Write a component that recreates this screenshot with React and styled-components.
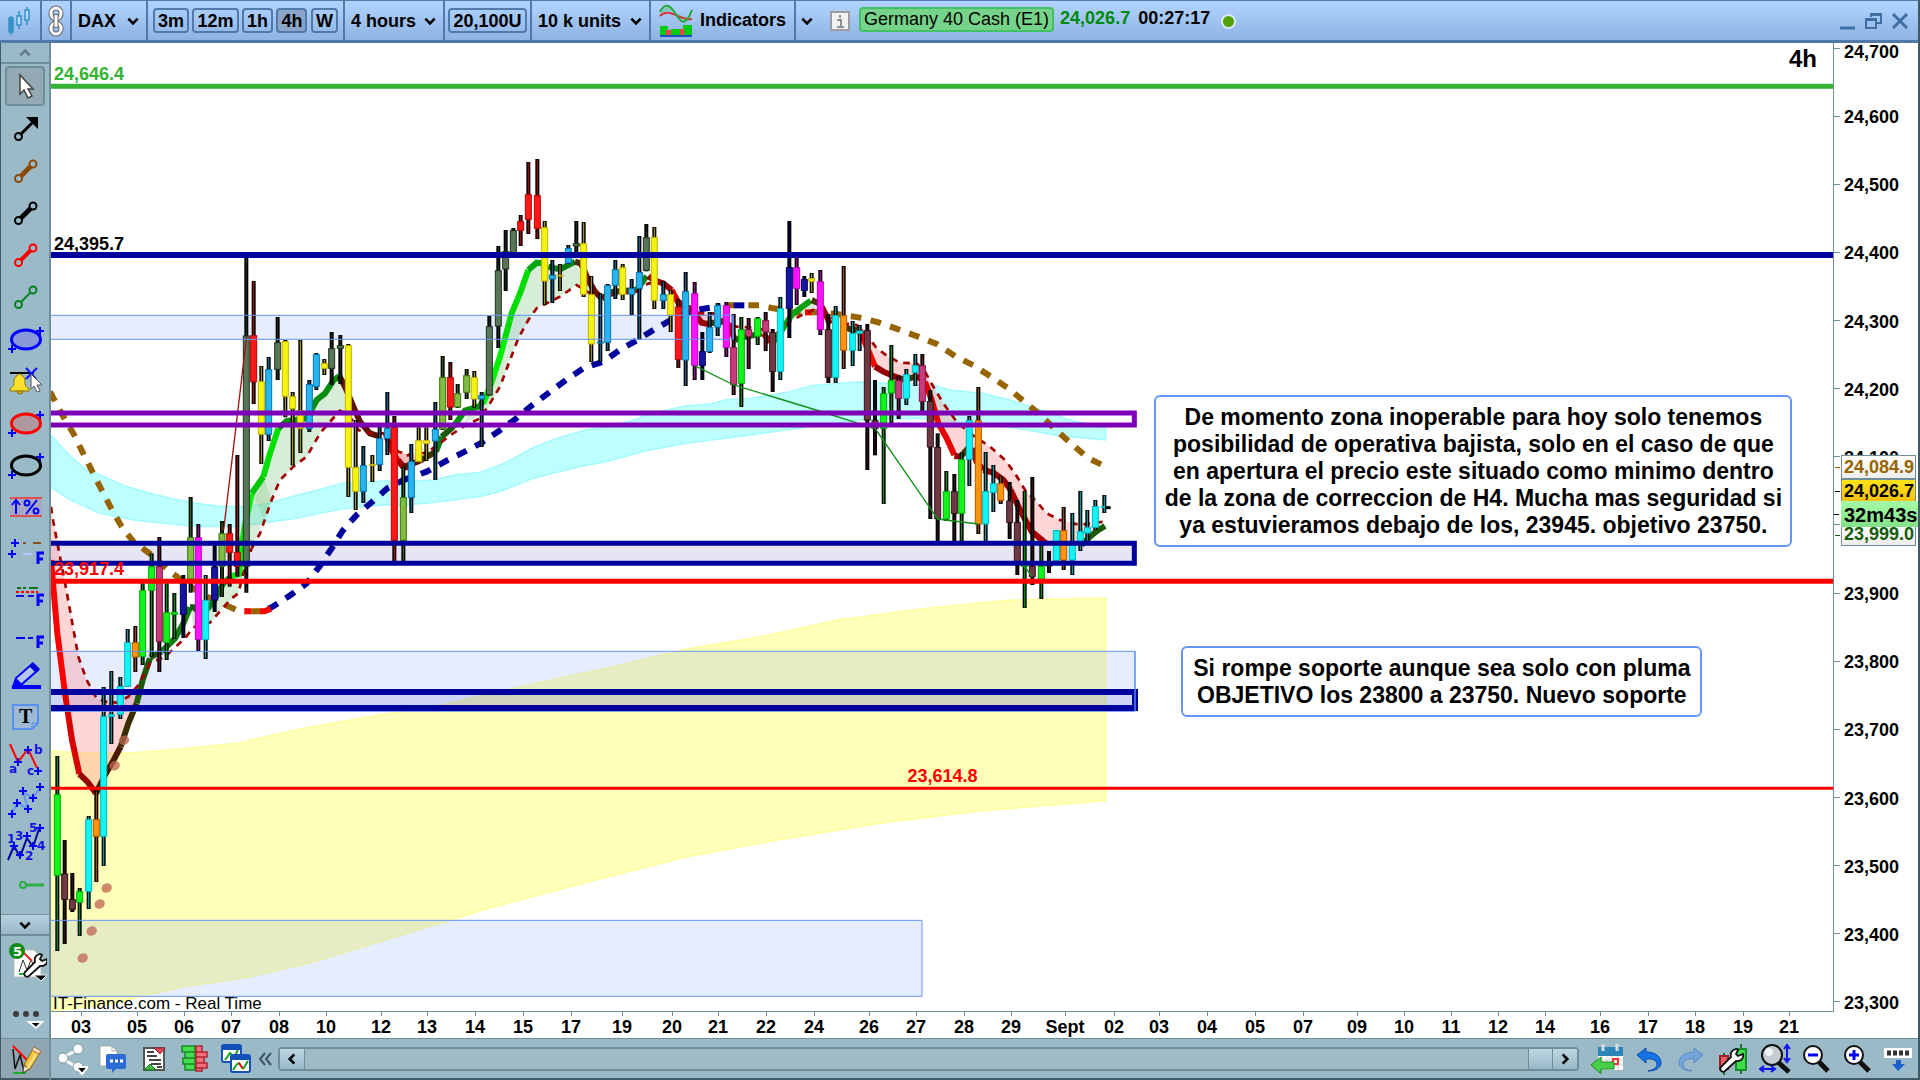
import React, { useState } from "react";
import styled, { createGlobalStyle, css } from "styled-components";

const colors = {
  bar: "#9bbac8",
  barLine: "#708d9a",
  edge: "#3f5965",
  topLine: "#517aaa",
  navy: "#00009c",
  purple: "#7d00b8",
  sky: "#6496f5"
};

const GlobalStyle = createGlobalStyle`
  * { box-sizing: border-box; }
  body {
    margin: 0;
    background: #fff;
    color: #000;
    font-family: "Liberation Sans", Arial, sans-serif;
  }
  button, select, input { font: inherit; color: inherit; }
`;

const candleColors = {
  g: ["#12f51c", "#00ad08"],
  c: ["#12f4f6", "#00b9c2"],
  o: ["#ff940f", "#b85800"],
  m: ["#6f3943", "#34131a"],
  k: ["#587657", "#1e3420"],
  r: ["#ff1818", "#bd0000"],
  y: ["#f5f312", "#c4b400"],
  b: ["#27b5f2", "#0777ad"],
  n: ["#1515a0", "#000060"],
  p: ["#ff12ff", "#bd00bd"],
  d: ["#c63b7b", "#8a0f49"],
  v: ["#80bd42", "#3a7608"]
};

// [x, high, low, top, bottom, color]
const blocks = [
  {
    x: -3,
    y: 1431,
    candles: [
      [22, 708, 1293, 823, 1067, "g"],
      [44, 960, 1272, 1061, 1139, "m"],
      [67, 1059, 1176, 1138, 1169, "m"],
      [89, 1104, 1248, 1114, 1148, "g"],
      [116, 888, 1167, 898, 1115, "c"],
      [139, 813, 1086, 898, 950, "o"],
      [161, 501, 1038, 589, 950, "c"],
      [184, 453, 672, 583, 590, "c"],
      [211, 471, 597, 499, 584, "c"],
      [233, 327, 500, 367, 500, "c"],
      [256, 318, 456, 367, 412, "o"],
      [278, 190, 435, 211, 410, "g"],
      [305, 100, 410, 139, 212, "g"],
      [328, 51, 456, 139, 365, "d"],
      [350, 190, 420, 277, 368, "g"],
      [373, 219, 357, 276, 284, "g"],
      [400, 165, 354, 190, 284, "n"]
    ]
  },
  {
    x: -3,
    y: 531,
    candles: [
      [422, 831, 1118, 952, 1078, "v"],
      [445, 912, 1293, 952, 1259, "p"],
      [467, 1065, 1317, 1140, 1260, "c"],
      [494, 970, 1176, 1040, 1141, "n"],
      [516, 903, 1131, 940, 1040, "v"],
      [539, 912, 1100, 940, 998, "r"],
      [562, 705, 1070, 997, 1040, "r"],
      [589, 113, 1118, 347, 1040, "k"],
      [611, 183, 552, 346, 486, "r"],
      [634, 438, 732, 484, 644, "y"],
      [656, 411, 663, 448, 644, "b"],
      [683, 291, 480, 367, 449, "k"],
      [706, 360, 592, 364, 530, "y"],
      [728, 516, 736, 529, 567, "y"],
      [751, 360, 699, 571, 626, "y"],
      [778, 480, 636, 493, 626, "b"],
      [799, 399, 510, 403, 500, "b"],
      [823, 417, 465, 430, 446, "y"],
      [845, 336, 495, 385, 446, "k"],
      [871, 345, 492, 376, 386, "k"],
      [895, 372, 831, 376, 743, "y"],
      [917, 600, 870, 742, 815, "y"],
      [940, 678, 849, 736, 815, "b"],
      [967, 705, 786, 733, 737, "y"],
      [989, 620, 753, 655, 734, "b"],
      [1012, 516, 705, 624, 656, "b"],
      [1033, 588, 1025, 622, 962, "r"]
    ]
  },
  {
    x: 1047,
    y: 291,
    candles: [
      [10, 980, 1265, 1072, 1202, "v"],
      [34, 912, 1119, 964, 1073, "b"],
      [56, 862, 965, 901, 965, "y"],
      [79, 862, 963, 901, 911, "y"],
      [106, 786, 1020, 868, 904, "b"],
      [128, 648, 870, 712, 868, "v"],
      [151, 666, 840, 712, 802, "r"],
      [173, 732, 804, 760, 802, "v"],
      [200, 687, 777, 706, 758, "v"],
      [223, 693, 803, 712, 778, "y"],
      [245, 756, 921, 766, 778, "b"],
      [268, 528, 767, 559, 766, "k"],
      [295, 318, 624, 391, 559, "k"],
      [317, 270, 453, 334, 388, "k"],
      [340, 264, 338, 271, 338, "k"],
      [362, 225, 318, 244, 272, "r"],
      [385, 66, 282, 163, 239, "r"],
      [412, 57, 297, 166, 266, "r"],
      [434, 243, 495, 262, 424, "y"],
      [457, 360, 489, 405, 418, "b"],
      [480, 372, 453, 405, 409, "y"],
      [505, 315, 372, 325, 370, "b"],
      [529, 243, 338, 310, 319, "k"],
      [551, 246, 471, 310, 464, "y"],
      [574, 408, 666, 463, 613, "y"],
      [601, 460, 666, 605, 610, "b"],
      [623, 432, 633, 436, 608, "b"],
      [646, 360, 477, 388, 437, "b"],
      [668, 372, 480, 382, 464, "y"],
      [695, 417, 525, 445, 464, "b"],
      [718, 288, 600, 397, 446, "b"],
      [739, 252, 394, 292, 392, "k"],
      [763, 261, 507, 292, 482, "y"],
      [790, 423, 507, 463, 482, "b"],
      [812, 450, 576, 463, 527, "y"],
      [835, 478, 684, 500, 659, "r"],
      [857, 396, 738, 454, 661, "b"],
      [884, 426, 720, 460, 677, "p"],
      [907, 576, 720, 634, 677, "n"],
      [929, 516, 639, 562, 635, "b"],
      [953, 489, 588, 496, 562, "b"],
      [979, 486, 651, 496, 623, "p"],
      [1001, 522, 765, 622, 734, "d"],
      [1024, 531, 801, 568, 731, "g"],
      [1046, 534, 687, 568, 590, "d"],
      [1073, 531, 615, 535, 590, "g"],
      [1097, 516, 633, 541, 577, "d"],
      [1118, 567, 756, 577, 695, "m"]
    ]
  },
  {
    x: 2157,
    y: 471,
    candles: [
      [31, 291, 540, 325, 515, "c"],
      [58, 63, 414, 202, 326, "n"],
      [80, 172, 315, 202, 266, "p"],
      [103, 228, 291, 238, 272, "n"],
      [125, 219, 279, 235, 245, "y"],
      [151, 210, 405, 244, 389, "p"],
      [175, 342, 549, 388, 533, "m"],
      [197, 318, 549, 346, 533, "c"],
      [221, 198, 507, 346, 452, "o"],
      [248, 363, 498, 400, 452, "c"],
      [269, 375, 453, 392, 401, "c"],
      [292, 372, 810, 391, 661, "m"],
      [315, 540, 766, 661, 686, "m"],
      [341, 561, 912, 580, 686, "g"],
      [364, 435, 670, 541, 580, "g"],
      [386, 527, 657, 541, 596, "d"],
      [409, 507, 615, 523, 596, "c"],
      [436, 462, 558, 496, 518, "c"],
      [457, 462, 640, 496, 605, "d"],
      [481, 570, 957, 604, 742, "m"],
      [503, 700, 1030, 742, 957, "m"],
      [529, 813, 963, 874, 958, "g"],
      [553, 822, 1030, 874, 941, "m"],
      [575, 758, 1030, 778, 941, "g"],
      [598, 648, 858, 661, 779, "c"],
      [625, 561, 1002, 661, 973, "o"],
      [647, 756, 1030, 874, 973, "c"],
      [670, 795, 936, 850, 878, "c"],
      [692, 828, 912, 850, 902, "o"],
      [719, 846, 1017, 902, 968, "m"],
      [742, 900, 1125, 967, 1090, "m"],
      [764, 873, 1224, 1090, 1100, "g"],
      [787, 831, 1155, 1098, 1130, "m"],
      [814, 1035, 1197, 1098, 1138, "g"],
      [837, 1053, 1119, 1095, 1099, "m"],
      [859, 990, 1084, 991, 1083, "c"],
      [881, 921, 1110, 991, 1081, "o"],
      [907, 939, 1125, 1035, 1081, "c"],
      [931, 873, 1053, 994, 1035, "c"],
      [952, 930, 1035, 982, 1000, "c"],
      [976, 900, 990, 919, 983, "c"],
      [1003, 885, 939, 919, 923, "c"]
    ]
  }
];

// fast average: [block, color, points]
const fastAverage = [
  [0, "#ff0000", "3,120 22,340 45,520"],
  [0, "#d80000", "45,520 66,660 88,762"],
  [0, "#960000", "88,762 112,785 138,820"],
  [0, "#4a1a00", "138,820 165,765 190,722 212,680"],
  [0, "#3a2e00", "212,680 235,610 260,550"],
  [0, "#1c5a08", "260,550 278,480 300,415"],
  [0, "#205a10", "300,412 335,395"],
  [0, "#0e7d14", "335,395 375,355 400,310 420,262"],
  [0, "#156010", "420,262 432,262 450,280"],
  [0, "#0e7d14", "470,270 490,245 520,190 545,168"],
  [0, "#00f000", "545,168 568,162 575,80"],
  [1, "#00f000", "575,980 582,930 605,820"],
  [1, "#00c808", "605,820 640,770"],
  [1, "#00e000", "640,770 660,700 685,625"],
  [1, "#078d10", "685,625 710,603 770,595 800,540 825,520 850,482 868,468"],
  [1, "#5c1400", "868,468 885,500 910,560 930,605 960,640 990,650"],
  [1, "#d80000", "1008,645 1025,690 1045,725"],
  [1, "#a00000", "1045,725 1065,742 1082,740"],
  [2, "#a00000", "-5,960 10,982"],
  [2, "#5c1400", "10,982 35,972 60,962"],
  [2, "#3f3200", "60,962 108,935"],
  [2, "#0e7d14", "108,935 125,890"],
  [2, "#1c5a08", "125,890 160,860"],
  [2, "#078d10", "160,860 195,812 240,798 255,770"],
  [2, "#00f000", "250,790 272,735 300,650 315,595"],
  [2, "#00dc00", "315,595 335,520 360,460 385,390"],
  [2, "#06a90c", "385,390 410,368 430,370"],
  [2, "#078010", "445,380 480,388 525,365"],
  [2, "#4a3000", "525,365 542,370"],
  [2, "#6e0e00", "542,370 570,430 585,455 605,475"],
  [2, "#443600", "605,475 640,455 710,450"],
  [2, "#078010", "710,450 740,408"],
  [2, "#970000", "745,408 760,420 790,430 815,450"],
  [2, "#e00000", "815,450 840,498"],
  [2, "#970000", "840,495 870,505 905,548 930,553"],
  [2, "#443600", "930,550 960,545 980,545"],
  [2, "#c80000", "985,550 1005,600"],
  [2, "#1c5a08", "1005,600 1030,592 1085,580"],
  [2, "#c80000", "1090,580 1105,600 1120,590"],
  [3, "#06a00c", "15,425 45,375 65,345 90,325 122,302"],
  [3, "#443600", "125,300 150,312"],
  [3, "#970000", "155,320 168,345 180,372"],
  [3, "#443600", "215,375 240,388 270,390"],
  [3, "#ff0000", "270,390 290,440 315,500"],
  [3, "#970000", "315,500 340,515 375,530 405,540"],
  [3, "#443600", "405,540 440,528"],
  [3, "#970000", "440,528 465,545"],
  [3, "#e60000", "465,545 485,600 505,670 530,715 553,765"],
  [3, "#970000", "553,768 575,770"],
  [3, "#443600", "572,770 600,738"],
  [3, "#b00000", "605,745 620,785 640,810"],
  [3, "#970000", "640,810 670,818 700,840 722,870"],
  [3, "#a80000", "722,870 750,930 785,995 828,1030"],
  [3, "#1c5a08", "935,1035 960,1010 982,992 1005,978"]
];

const trail = [
  [0, "3,-40 10,5 28,100 50,215 85,410 110,480 140,535 165,545 200,548 235,530 265,495 300,430 345,410 405,355 430,322 480,308 520,262 545,235 565,220 580,160 605,85"],
  [1, "605,985 630,940 665,840 690,780 730,740 770,710 810,640 845,600 870,572 900,590 925,630 960,640 1000,640 1045,695 1080,705"],
  [2, "20,946 80,938 120,910 145,890 190,860 240,835 270,790 300,740 330,660 355,595 385,540 410,505 440,490 480,470 530,435 570,460 610,470 650,463 710,455 745,430 790,430 835,480 865,500 900,520 940,520 985,550 1010,560 1050,562 1110,572"],
  [3, "20,400 60,365 95,345 130,330 180,350 215,370 260,375 280,390 320,445 355,470 390,488 440,490 465,515 490,560 520,610 560,665 600,700 660,740 705,780 735,820 765,870 800,905 830,940 870,960 930,975 960,970 1003,965"]
];

const slowAverage = [
  [1, "#966400", "0,515 40,590 70,640 98,697 127,755 155,810 185,868 215,920 250,965 305,1005 355,1050 400,1085 460,1125 515,1150 565,1172 590,1174"],
  [1, "#00009c", "655,1166 668,1160 722,1125 770,1090 808,1040 845,985 878,932 920,885 967,845 1012,805 1070,775"],
  [2, "#00009c", "5,1022 80,995 136,964 190,937 245,908 298,872 348,836 397,795 448,757 498,720 550,685 610,665 662,628 715,598 770,564 830,530 890,510 950,500 962,498"],
  [2, "#966400", "1045,496 1078,496 1120,505 1140,508"],
  [3, "#966400", "60,337 92,337 150,337 205,343 265,352 325,367 385,388 444,410 500,432 555,468 610,496 663,530 716,566 763,605 815,648 858,690 905,732 952,773 1003,798"]
];

const clouds = [
  [0, "rgba(255,150,150,.4)", "3,-40 28,100 50,215 85,410 110,480 140,535 165,545 200,548 235,530 270,495 260,550 235,610 212,680 165,765 138,820 88,762 66,660 45,520 22,340 3,120"],
  [0, "rgba(130,200,130,.32)", "420,262 450,275 490,245 520,190 545,168 568,162 580,50 605,-80 640,-130 665,-60 605,85 580,160 565,220 520,262 480,308 430,322"],
  [1, "rgba(130,200,130,.32)", "605,820 640,770 660,700 685,625 710,603 770,595 800,540 850,482 868,468 900,590 870,572 845,600 810,640 770,710 730,740 690,780 665,840 645,900"],
  [1, "rgba(255,150,150,.4)", "1020,660 1045,695 1080,705 1080,740 1065,742 1040,720"],
  [2, "rgba(255,150,150,.4)", "-8,930 20,946 50,946 50,965 10,982 -8,960"],
  [2, "rgba(130,200,130,.32)", "250,790 300,650 335,520 385,390 410,368 480,388 525,365 570,450 530,435 480,470 440,490 410,505 385,540 355,595 330,660 300,740 262,810 195,850 200,812"],
  [2, "rgba(255,150,150,.4)", "870,500 900,518 950,522 930,550 905,548"],
  [3, "rgba(130,200,130,.32)", "70,355 122,302 160,350 130,330 95,345"],
  [3, "rgba(255,150,150,.4)", "270,385 320,445 355,470 390,488 440,490 465,515 490,560 520,610 560,665 600,700 660,740 705,780 735,820 765,870 800,905 830,940 870,960 930,975 990,975 935,1035 828,1030 785,995 750,930 722,870 700,840 640,810 600,738 575,770 553,765 530,715 505,670 485,600 465,545 440,528 405,540 340,515 315,500"]
];

const cyanBand =
  "0,1176 50,1231 100,1276 160,1301 220,1328 300,1351 360,1366 440,1381 500,1389 580,1391 650,1381 740,1356 800,1341 870,1321 930,1319 1000,1313 1047,1316 1147,1311 1217,1294 1287,1288 1347,1266 1397,1241 1447,1213 1517,1186 1607,1159 1667,1153 1747,1131 1797,1111 1907,1088 1977,1083 2027,1069 2097,1066 2157,1056 2217,1046 2277,1028 2357,1021 2427,1016 2517,1021 2647,1026 2697,1041 2797,1051 2877,1071 2987,1106 3057,1131 3165,1156 3165,1191 3027,1179 2897,1156 2757,1141 2597,1126 2427,1131 2157,1168 2097,1176 1907,1201 1787,1223 1667,1256 1587,1271 1527,1286 1447,1306 1347,1346 1287,1361 1147,1379 1067,1386 997,1386 867,1399 737,1426 557,1451 437,1451 337,1441 247,1431 147,1411 57,1371 0,1333";

const yellowBand =
  "0,2124 100,2129 240,2129 400,2116 567,2099 640,2081 777,2052 900,2030 1170,1986 1350,1944 1530,1904 1683,1872 1905,1818 2124,1782 2358,1731 2637,1694 2877,1671 3165,1664 3165,2274 2787,2304 2493,2340 2199,2388 1905,2442 1611,2517 1317,2595 1170,2640 777,2760 597,2802 396,2832 288,2856 180,2885 0,2904";

const dots = [[222, 661], [194, 737], [170, 1104], [149, 1152], [125, 1233], [98, 1314]];

/* ---------- axes ---------- */

const prices = Array.from({ length: 15 }, (_, i) => (24700 - i * 100).toLocaleString("en-US"));

const dates = [
  ["03", 81], ["05", 137], ["06", 184], ["07", 231], ["08", 279], ["10", 326], ["12", 381], ["13", 427],
  ["14", 475], ["15", 523], ["17", 571], ["19", 622], ["20", 672], ["21", 718], ["22", 766], ["24", 814],
  ["26", 869], ["27", 916], ["28", 964], ["29", 1011], ["Sept", 1065], ["02", 1114], ["03", 1159],
  ["04", 1207], ["05", 1255], ["07", 1303], ["09", 1357], ["10", 1404], ["11", 1451], ["12", 1498],
  ["14", 1545], ["16", 1600], ["17", 1648], ["18", 1695], ["19", 1743], ["21", 1789]
];

/* ---------- shell ---------- */

const Window = styled.div`
  display: flex;
  flex-direction: column;
  min-height: 100vh;
  border-right: 2px solid ${colors.edge};
  background: #fff;
`;

const TopBar = styled.header`
  display: flex;
  height: 43px;
  flex-shrink: 0;
  border-top: 1px solid ${colors.topLine};
  border-bottom: 3px solid ${colors.topLine};
  background: linear-gradient(#b1d4ff, #8fb3e2);
  font-size: 18px;
  font-weight: 700;
`;

const Cell = styled.div`
  display: flex;
  align-items: center;
  justify-content: ${({ $align }) => $align || "flex-start"};
  width: ${({ $w }) => ($w ? `${$w}px` : "auto")};
  padding: 0 ${({ $pad }) => $pad || 0}px;
  border-right: ${({ $plain }) => ($plain ? 0 : 2)}px solid ${colors.topLine};
  white-space: nowrap;
`;

const PlainButton = styled.button`
  display: flex;
  align-items: center;
  justify-content: center;
  gap: 7px;
  padding: 0;
  border: 0;
  background: none;
  font-weight: inherit;
`;

const Picker = styled.label`
  display: flex;
  flex: 1;
  align-items: center;
  justify-content: space-between;
`;

const Select = styled.select`
  appearance: none;
  padding: 0;
  border: 0;
  background: none;
  font-weight: 700;
`;

const Interval = styled.button`
  height: 25px;
  padding: 0 3px;
  border: 2px solid ${colors.topLine};
  border-radius: 4px;
  background: ${({ $active }) => ($active ? "#8aa5c8" : "transparent")};
  font-weight: 700;
  line-height: 20px;
`;

const Instrument = styled.button`
  height: 25px;
  margin: 0 0 3px 9px;
  padding: 0 3px;
  border: 2px solid #43c065;
  border-radius: 4px;
  background: #76d48a;
  font-size: 18px;
  font-weight: 400;
  line-height: 18px;
`;

const Quote = styled.output`
  padding-bottom: 4px;
  margin-left: ${({ $gap }) => $gap}px;
  color: ${({ $color }) => $color};
`;

const Live = styled.span`
  width: 15px;
  height: 15px;
  margin: 2px 0 0 11px;
  border: 2px solid #dcebf5;
  border-radius: 50%;
  background: #4fa000;
`;

const WindowButtons = styled.div`
  display: flex;
  align-items: center;
  gap: 8px;
  margin-left: auto;
  padding-right: 9px;
`;

const Body = styled.div`
  display: flex;
  flex: 1;
`;

const SideBar = styled.nav`
  display: flex;
  flex-direction: column;
  flex-shrink: 0;
  width: 51px;
  border-left: 1px solid ${colors.edge};
  border-right: 2px solid ${colors.barLine};
  background: ${colors.bar};
`;

const Scroller = styled(PlainButton)`
  height: ${({ $h }) => $h}px;
  border-bottom: 2px solid ${colors.barLine};
  ${({ $raised }) =>
    $raised &&
    css`
      border-top: 1px solid ${colors.barLine};
      background: linear-gradient(#b8d3df, #98b6c5);
    `}
`;

const Tools = styled.div`
  display: flex;
  flex: 1;
  flex-direction: column;
  padding-top: 2px;
`;

const Tool = styled(PlainButton)`
  width: 48px;
  height: ${({ $h }) => $h || 42}px;
`;

const Selected = styled(Tool)`
  width: 40px;
  height: 40px;
  margin: 0 4px 2px;
  border: 2px solid ${colors.barLine};
  border-radius: 4px;
  background: #93a9b3;
`;

const DrawTool = styled(Tool)`
  height: 42px;
  border-top: 1px solid ${colors.barLine};
  border-bottom: 2px solid ${colors.edge};
  background: #90a6b1;
`;

const Main = styled.main`
  display: flex;
  flex: 1;
  flex-direction: column;
  min-width: 0;
`;

const ChartGrid = styled.div`
  display: grid;
  flex: 1;
  grid-template-columns: 1fr 84px;
  grid-template-rows: 1fr 26px;
`;

const Plot = styled.section`
  position: relative;
  border-right: 1px solid ${colors.barLine};
  border-bottom: 1px solid ${colors.barLine};
  overflow: hidden;
`;

const Canvas = styled.svg`
  position: absolute;
  inset: 0;
  width: 100%;
  height: 100%;
`;

const Label = styled.span`
  position: absolute;
  left: ${({ $x }) => (100 * ($x - 51)) / 1783}%;
  top: ${({ $y }) => (100 * ($y - 43)) / 969}%;
  color: ${({ $color }) => $color || "#000"};
  font-size: ${({ $size }) => $size || 18}px;
  font-weight: ${({ $weight }) => $weight || 700};
  line-height: 20px;
  white-space: nowrap;
`;

const Note = styled.p`
  position: absolute;
  left: ${({ $x }) => (100 * ($x - 51)) / 1783}%;
  top: ${({ $y }) => (100 * ($y - 43)) / 969}%;
  width: ${({ $w }) => $w}px;
  margin: 0;
  padding: 7px 0 6px;
  border: 2px solid ${colors.sky};
  border-radius: 6px;
  background: #fff;
  font-size: 23px;
  font-weight: 700;
  line-height: 27px;
  text-align: center;
  white-space: nowrap;
`;

const PriceAxis = styled.aside`
  position: relative;
  display: flex;
`;

const PriceList = styled.ul`
  display: flex;
  flex: 1;
  flex-direction: column;
  justify-content: space-between;
  margin: 0;
  padding: 0 0 5px;
  list-style: none;
  font-size: 18px;
  font-weight: 700;

  li {
    display: flex;
    align-items: center;
    gap: 4px;
    height: 10px;
    line-height: 10px;
  }
  li::before {
    content: "";
    width: 6px;
    height: 1px;
    background: ${colors.barLine};
  }
  li span {
    padding-top: 2px;
  }
  li:first-child span {
    padding-top: 8px;
  }
`;

const PriceTag = styled.span`
  position: absolute;
  left: 7px;
  right: ${({ $wide }) => ($wide ? 0 : 2)}px;
  top: ${({ $y }) => (100 * ($y - 43)) / 969}%;
  height: ${({ $h }) => $h}px;
  padding-left: ${({ $wide }) => ($wide ? 3 : 2)}px;
  border: ${({ $wide }) => ($wide ? 0 : 1)}px solid ${colors.barLine};
  background: ${({ $bg }) => $bg};
  color: ${({ $color }) => $color};
  font-size: ${({ $wide }) => ($wide ? 20 : 18)}px;
  font-weight: 700;
  line-height: ${({ $h, $wide }) => ($wide ? $h + 2 : $h - 2)}px;
  white-space: nowrap;

  &::before {
    content: "";
    position: absolute;
    left: -7px;
    top: 50%;
    width: 5px;
    height: 1px;
    background: ${({ $color }) => $color};
  }
`;

const DateAxis = styled.ol`
  display: flex;
  grid-column: 1 / -1;
  margin: 0;
  padding: 0 0 0 30px;
  list-style: none;
  font-size: 18px;
  font-weight: 700;
`;

const DateMark = styled.li`
  flex: ${({ $gap }) => $gap} 0 0;
  min-width: 0;
  background: linear-gradient(${colors.barLine}, ${colors.barLine}) 0 0 / 1px 4px no-repeat;

  span {
    display: flex;
    justify-content: center;
    width: 0;
    padding-top: 5px;
    line-height: 20px;
  }
`;

const BottomBar = styled.footer`
  display: flex;
  align-items: center;
  height: 42px;
  border-top: 1px solid ${colors.barLine};
  border-bottom: 2px solid ${colors.edge};
  background: ${colors.bar};
`;

const BarTool = styled(PlainButton)`
  flex-shrink: 0;
  width: ${({ $w }) => $w || 41}px;
  height: 38px;
`;

const ScrollTrack = styled.div`
  display: flex;
  flex: 1;
  height: 24px;
  margin: 0 7px 0 4px;
  border: 2px solid ${colors.barLine};
  border-radius: 4px;
`;

const ScrollArrow = styled(PlainButton)`
  width: 24px;
  background: linear-gradient(#bed8e2, #98b7c6);
`;

const Range = styled.input`
  appearance: none;
  flex: 1;
  min-width: 0;
  height: 20px;
  margin: 0;
  border: solid ${colors.barLine};
  border-width: 0 1px;
  background: #a0bac6;

  &::-webkit-slider-thumb {
    appearance: none;
    width: 24px;
    height: 20px;
    border-left: 1px solid ${colors.barLine};
    background: linear-gradient(#bed8e2, #98b7c6);
  }
`;

/* ---------- icons ---------- */

const Caret = ({ dir = "down", color = "#000", size = 14 }) => {
  const turn = { down: 0, up: 180, left: 90, right: -90 }[dir];
  return (
    <svg width={size} height={size} viewBox="0 0 12 12" aria-hidden="true">
      <path d="M2 4l4 4 4-4" transform={`rotate(${turn} 6 6)`} fill="none" stroke={color} strokeWidth="2.2" />
    </svg>
  );
};

const Icon = ({ w = 48, h = 42, children }) => (
  <svg width={w} height={h} viewBox={`0 0 ${w} ${h}`} fill="none" aria-hidden="true">
    {children}
  </svg>
);

const Plus = ({ x, y, color = "#00f" }) => (
  <path d={`M${x - 4} ${y}h8M${x} ${y - 4}v8`} stroke={color} strokeWidth="2" />
);

const Segment = ({ color, width }) => (
  <Icon>
    <path d="M20 26L30 16" stroke={color} strokeWidth={width} />
    <circle cx="17.500" cy="28.500" r="3.500" stroke={color} strokeWidth="2" />
    <circle cx="32" cy="14" r="3.500" stroke={color} strokeWidth="2" />
  </Icon>
);

const Ellipse = ({ color, fill, marks = "#00f" }) => (
  <Icon>
    <Plus x={11} y={31} color={marks} />
    <Plus x={39} y={13} color={marks} />
    <ellipse cx="25" cy="21.500" rx="14.500" ry="9.500" fill={fill} stroke={color} strokeWidth="3" />
  </Icon>
);

const FMark = ({ y }) => <path d={`M37 ${y + 11}V${y}H43M36 ${y + 6}H42`} stroke="#00f" strokeWidth="3" />;

const glyph = { fontFamily: "DejaVu Sans, sans-serif", fontSize: 12, fontWeight: 700, fill: "#1414e0" };

const DrawingIcon = () => (
  <Icon w={36} h={32}>
    <path d="M6 6l2 20 5-14 4 16 3-8" stroke="#111" strokeWidth="1.500" />
    <path d="M6 30h13" stroke="#19b030" strokeWidth="2" />
    <path d="M6 3l14 14" stroke="#f00" strokeWidth="2" />
    <path d="M27 4l7 4-11 18-7 4 1-8z" fill="#f5c542" stroke="#8a6a1a" />
    <path d="M27 4l7 4-2 3-7-4z" fill="#f7dcc8" stroke="#a07840" />
    <path d="M17 22l5 4-6 4z" fill="#f2e0c0" stroke="#444" />
    <path d="M29 11L20 26" stroke="#fbe48a" strokeWidth="2" />
  </Icon>
);

const Magnifier = ({ children }) => (
  <Icon w={30} h={30}>
    <path d="M18 18l9 9" stroke="#111" strokeWidth="5" />
    <circle cx="12" cy="11" r="9" fill="#fff" stroke="#111" strokeWidth="2" />
    {children}
  </Icon>
);

const Wrench = () => (
  <path
    d="M4 24l10-10c-1-4 1-7 5-8l2 1-2 4 2 2 5-2c1 4-2 8-7 7L8 28c-3 2-6-1-4-4z"
    fill="#fff"
    stroke="#111"
    strokeWidth="1.800"
  />
);

const drawingTools = [
  ["Arrow", <Icon><path d="M19 27L31 15" stroke="#000" strokeWidth="3" /><path d="M37 9v12L25 9z" fill="#000" /><circle cx="17.500" cy="28.500" r="3.500" stroke="#000" strokeWidth="2" /></Icon>],
  ["Brown segment", <Segment color="#8a4a08" width={5} />],
  ["Black segment", <Segment color="#000" width={5} />],
  ["Red segment", <Segment color="#f00" width={4} />],
  ["Green segment", <Segment color="#088020" width={2} />],
  ["Blue ellipse", <Ellipse color="#00f" fill="#8898d8" />],
  ["Alert", (
    <Icon>
      <path d="M9 13h24" stroke="#000" strokeWidth="2" />
      <path d="M25 8l10 11M36 8L25 19" stroke="#11f" strokeWidth="2" />
      <path d="M18 14c-1 0-2 1-2 2-3 1-3 4-3 8 0 2-3 4-4 5v2h19v-2c-1-1-4-3-4-5 0-4 0-7-3-8 0-1-1-2-3-2z" fill="#fbe12c" stroke="#8a7400" />
      <path d="M16 31a3 3 0 006 0z" fill="#d5ac00" stroke="#8a7400" />
      <path d="M30 14v15l3-3 3 6 3-1-3-6h5z" fill="#fff" stroke="#555" />
    </Icon>
  )],
  ["Red ellipse", <Ellipse color="#f00" fill="#b098a0" />],
  ["Black ellipse", <Ellipse color="#000" />],
  ["Percent", (
    <Icon>
      <path d="M9 12h32v18H9z" fill="#a9a8c4" />
      <path d="M9 12h32M9 30h32" stroke="#e05050" strokeWidth="2" />
      <path d="M15 28V15M11 19l4-5 4 5" stroke="#00f" strokeWidth="2" />
      <circle cx="26" cy="17" r="2.500" stroke="#00f" strokeWidth="2" />
      <circle cx="35" cy="25" r="2.500" stroke="#00f" strokeWidth="2" />
      <path d="M36 14L25 28" stroke="#00f" strokeWidth="2" />
    </Icon>
  )],
  ["Fibonacci", (
    <Icon>
      <Plus x={14} y={15} /><Plus x={11} y={26} />
      <path d="M22 15h3M32 15h8" stroke="#805020" strokeWidth="2" />
      <path d="M22 26h9" stroke="#b8c8ff" strokeWidth="2" />
      <FMark y={25} />
    </Icon>
  )],
  ["Extension", (
    <Icon>
      <path d="M16 18h4M22 18h3M28 18h9" stroke="#107020" strokeWidth="2" />
      <path d="M15 22h22" stroke="#f00" strokeWidth="2" strokeDasharray="3 2" />
      <path d="M15 26h8M27 26h6" stroke="#11d" strokeWidth="2" />
      <FMark y={25} />
    </Icon>
  )],
  ["Retracement", <Icon><path d="M15 26h9M27 26h5" stroke="#00f" strokeWidth="2" /><FMark y={25} /></Icon>],
  ["Freehand", (
    <Icon>
      <path d="M11 33h29" stroke="#00f" strokeWidth="4" />
      <path d="M12 33l3-9 16-14 6 6-16 14z" fill="#b3c5e8" stroke="#00f" strokeWidth="2" />
      <path d="M28 12l4-4 7 7-4 4z" fill="#00d" />
      <path d="M12 33l3-9 6 6z" fill="#00f" />
    </Icon>
  )],
  ["Text", (
    <Icon>
      <path d="M12 9h25v18l-6 6H12z" fill="#9db9d4" stroke="#5a90ee" strokeWidth="2" />
      <path d="M31 33v-6h6" stroke="#5a90ee" />
      <text x="18" y="27" fontFamily="Liberation Serif, serif" fontSize="20" fontWeight="700" fill="#000">T</text>
    </Icon>
  )],
  ["Pattern abc", (
    <Icon>
      <path d="M9 6l8 18 10-13 9 19" stroke="#f00" strokeWidth="2" />
      <Plus x={17} y={24} /><Plus x={27} y={12} /><Plus x={37} y={33} />
      <text x="8" y="35" {...glyph}>a</text><text x="33" y="16" {...glyph}>b</text><text x="26" y="37" {...glyph}>c</text>
    </Icon>
  )],
  ["Polyline", (
    <Icon>
      <path d="M11 34l5-11 11 6-5-17 10 6 7-11" stroke="#6496f5" strokeWidth="2" />
      <Plus x={11} y={34} /><Plus x={16} y={23} /><Plus x={27} y={29} /><Plus x={22} y={11} /><Plus x={32} y={18} /><Plus x={39} y={7} />
    </Icon>
  )],
  ["Elliott wave", (
    <Icon>
      <path d="M7 38l6-14 6 11 7-19 6 9 6-18" stroke="#009" strokeWidth="2" />
      <Plus x={13} y={24} /><Plus x={19} y={33} /><Plus x={26} y={14} /><Plus x={32} y={24} /><Plus x={39} y={6} />
      <text x="6" y="21" {...glyph}>1</text><text x="24" y="38" {...glyph}>2</text><text x="14" y="18" {...glyph}>3</text>
      <text x="36" y="28" {...glyph}>4</text><text x="28" y="10" {...glyph}>5</text>
    </Icon>
  )],
  ["Horizontal ray", <Icon><circle cx="22" cy="21" r="3" stroke="#2fae45" strokeWidth="2" /><path d="M25 21h18" stroke="#2fae45" strokeWidth="3" /></Icon>]
];

const leftActions = [
  ["Share", (
    <Icon w={32} h={32}>
      <path d="M23 6L6 15l17 11" stroke="#fff" strokeWidth="3" />
      <g fill="#fff" stroke="#7d98a5"><circle cx="22" cy="6" r="5" /><circle cx="7" cy="15" r="5" /><circle cx="22" cy="24" r="5" /></g>
      <path d="M20 24h12l-6 7z" fill="#000" stroke="#fff" strokeWidth="2" />
    </Icon>
  )],
  ["Chat", (
    <Icon w={30} h={30}>
      <path d="M2 2h12l5 5v15H2z" fill="#fff" stroke="#aaa" /><path d="M14 2v5h5" stroke="#aaa" />
      <path d="M10 10h16q2 0 2 2v11q0 2-2 2h-8l-4 4v-4h-4q-2 0-2-2V12q0-2 2-2z" fill="#2c6bd4" />
      <path d="M12 17h3M17 17h3M22 17h3" stroke="#fff" strokeWidth="3" />
    </Icon>
  )],
  ["Orders list", (
    <Icon w={26} h={30}>
      <path d="M3 4h20v22H3z" fill="#fff" stroke="#555" strokeWidth="2" />
      <path d="M6 8h7M6 12h10M8 16h12M10 20h10M16 23h5" stroke="#444" strokeWidth="2" />
      <path d="M13 4h11l-5 6z" fill="#e04858" stroke="#a02030" /><path d="M3 26h12l-6-6z" fill="#3cc040" stroke="#187020" />
    </Icon>
  )],
  ["Order book", (
    <Icon w={30} h={30}>
      <path d="M2 2h13v6H2zM5 8h10v6H5zM3 14h12v6H3zM5 20h10v6H5z" fill="#45dc50" stroke="#188820" strokeWidth="1.500" />
      <path d="M16 2h6v6h-6zM16 8h11v5H16zM16 13h8v6h-8zM16 19h11v5H16zM16 24h6v3h-6z" fill="#f07080" stroke="#b02030" strokeWidth="1.500" />
    </Icon>
  )],
  ["Layouts", (
    <Icon w={32} h={32}>
      <rect x="2" y="2" width="19" height="17" rx="2" fill="#fff" stroke="#1350b8" strokeWidth="2" /><path d="M2 5h19" stroke="#1350b8" strokeWidth="4" />
      <path d="M5 17l5-7 4 4 4-7" stroke="#12a020" strokeWidth="2" />
      <rect x="11" y="12" width="19" height="17" rx="2" fill="#fff" stroke="#1350b8" strokeWidth="2" /><path d="M11 15h19" stroke="#1350b8" strokeWidth="4" />
      <path d="M13 27l4-6 3-1" stroke="#12a020" strokeWidth="2" /><path d="M19 20l4 6" stroke="#e00" strokeWidth="2" /><path d="M23 26l5-8" stroke="#12a020" strokeWidth="2" />
    </Icon>
  )]
];

const rightActions = [
  ["Go to date", (
    <Icon w={34} h={32}>
      <path d="M8 12h25v15H8z" fill="#fff" /><path d="M8 4h25v9H8z" fill="#2c84b8" />
      <path d="M13 1v7M27 1v7" stroke="#d5dde2" strokeWidth="3" />
      <path d="M12 13v14M17 13v14M22 13v14M28 13v14M8 17h25M8 22h25" stroke="#ccc" />
      <path d="M23 16h5v5h-5z" stroke="#f33" strokeWidth="2" />
      <path d="M1 22l10-8v5h13v7H11v5z" fill="#48d048" stroke="#208820" />
    </Icon>
  ), 42],
  ["Undo", <Icon w={30} h={30}><path d="M3 11l9-7v4c10 0 15 5 15 11 0 5-6 8-13 8 6-1 9-4 9-7 0-3-4-6-11-5v4z" fill="#1474e8" stroke="#0c48a8" /></Icon>, 42],
  ["Redo", <Icon w={30} h={30}><path d="M27 11l-9-7v4C8 8 3 13 3 19c0 5 6 8 13 8-6-1-9-4-9-7 0-3 4-6 11-5v4z" fill="#74a4dc" stroke="#5c8cc4" /></Icon>, 42],
  ["Chart settings", (
    <Icon w={32} h={32}>
      <path d="M7 10v22M24 1v30" stroke="#207030" strokeWidth="2" /><path d="M3 13h8v13H3z" fill="#e06068" stroke="#a02028" strokeWidth="2" />
      <path d="M19 6h10v21H19z" fill="#40dc48" stroke="#18902a" strokeWidth="2" /><Wrench />
    </Icon>
  ), 42],
  ["Zoom region", (
    <Icon w={32} h={32}>
      <path d="M19 19l11 10" stroke="#111" strokeWidth="5" /><circle cx="13" cy="12" r="10" fill="#c4cdd1" stroke="#111" strokeWidth="2" />
      <circle cx="10" cy="9" r="4" fill="#edf1f3" />
      <path d="M28 4v13M25 6l3-4 3 4M25 15l3 4 3-4M3 26h11M5 23l-4 3 4 3M12 23l4 3-4 3" stroke="#1212f0" strokeWidth="2" />
    </Icon>
  )],
  ["Zoom out", <Magnifier><path d="M7 11h10" stroke="#00f" strokeWidth="3" /></Magnifier>],
  ["Zoom in", <Magnifier><path d="M7 11h10M12 6v10" stroke="#00f" strokeWidth="3" /></Magnifier>],
  ["Show keyboard", (
    <Icon w={30} h={30}>
      <path d="M1 4h28v10H1z" fill="#fff" /><path d="M4 9h23" stroke="#333" strokeWidth="5" strokeDasharray="4 2" />
      <path d="M13 16h5v4h4l-7 7-6-7h4z" fill="#1c60d0" />
    </Icon>
  )]
];

/* ---------- parts ---------- */

const intervals = ["3m", "12m", "1h", "4h", "W"];

function Dropdown({ label, value }) {
  return (
    <Picker>
      <Select aria-label={label} defaultValue={value}>
        <option>{value}</option>
      </Select>
      <Caret />
    </Picker>
  );
}

function Toolbar() {
  const [interval, setActive] = useState("4h");
  return (
    <TopBar>
      <Cell $w={42} $align="center">
        <PlainButton aria-label="Chart type">
          <Icon w={28} h={30}>
            <g stroke="#3393c8" strokeWidth="1.500">
              <path d="M5 10v19M13 5v18M21 1v18" />
              <path d="M3 12h4v14H3z" fill="#3393c8" />
              <path d="M11 10h4v9h-4zM19 4h4v10h-4z" fill="#b9dcfa" />
            </g>
          </Icon>
        </PlainButton>
      </Cell>
      <Cell $w={30} $align="center">
        <PlainButton aria-label="Link charts">
          <Icon w={18} h={34}>
            <g stroke="#666">
              <rect x="4" y="4" width="10" height="11" rx="5" strokeWidth="5" />
              <rect x="4" y="19" width="10" height="11" rx="5" strokeWidth="5" />
            </g>
            <g stroke="#fff">
              <rect x="4" y="4" width="10" height="11" rx="5" strokeWidth="3" />
              <rect x="4" y="19" width="10" height="11" rx="5" strokeWidth="3" />
            </g>
            <path d="M9 10v14" stroke="#666" strokeWidth="5" />
            <path d="M9 11v12" stroke="#fff" strokeWidth="3" />
          </Icon>
        </PlainButton>
      </Cell>
      <Cell $w={76} $pad={6}>
        <Dropdown label="Symbol" value="DAX" />
      </Cell>
      <Cell $w={197} $align="space-between" $pad={5}>
        {intervals.map(name => (
          <Interval key={name} $active={name === interval} onClick={() => setActive(name)}>
            {name}
          </Interval>
        ))}
      </Cell>
      <Cell $w={100} $pad={6}>
        <Dropdown label="Timeframe" value="4 hours" />
      </Cell>
      <Cell $w={87} $align="center">
        <Interval>20,100U</Interval>
      </Cell>
      <Cell $w={119} $pad={6}>
        <Dropdown label="Units" value="10 k units" />
      </Cell>
      <Cell $w={145} $align="center">
        <PlainButton>
          <Icon w={34} h={34}>
            <path d="M2 10C6 0 11 1 16 9s10 14 16-2l-4 6C20 12 12 2 2 10z" fill="#86c7bd" />
            <path d="M1 12C10 2 22 18 33 15" stroke="#d8303c" strokeWidth="2" />
            <path d="M1 8C6-2 11 1 16 9s10 16 17-3" stroke="#22a838" strokeWidth="2" />
            <path d="M1 22h8v9H1zM12 25h10v6H12zM24 21h9v10h-9z" fill="#00cc10" />
            <path d="M7 26h5v5H7zM21 25h4v6h-4z" fill="#f04050" />
            <path d="M1 32h32" stroke="#1c50c0" strokeWidth="2" />
          </Icon>
          Indicators
        </PlainButton>
      </Cell>
      <Cell $plain $pad={4}>
        <PlainButton aria-label="More indicators"><Caret /></PlainButton>
      </Cell>
      <Cell $plain $pad={12}>
        <PlainButton aria-label="Instrument details">
          <Icon w={20} h={20}>
            <path d="M1 1h18v18H1z" fill="#f2f2f2" stroke="#9c9c9c" strokeWidth="2" />
            <path d="M10 4v3M7 9h4v7M7 16h7" stroke="#8a9298" strokeWidth="2" />
          </Icon>
        </PlainButton>
        <Instrument>Germany 40 Cash (E1)</Instrument>
        <Quote $gap={6} $color="#008a0a">24,026.7</Quote>
        <Quote $gap={8} $color="#000">00:27:17</Quote>
        <Live />
      </Cell>
      <WindowButtons>
        <PlainButton aria-label="Minimize">
          <Icon w={18} h={20}><path d="M1 17h15" stroke="#3f6ea5" strokeWidth="3" /></Icon>
        </PlainButton>
        <PlainButton aria-label="Restore">
          <Icon w={18} h={20}><path d="M6 6V3h10v9h-4M1 8h10v9H1zM1 9h10M6 4h10" stroke="#3f6ea5" strokeWidth="2" /></Icon>
        </PlainButton>
        <PlainButton aria-label="Close">
          <Icon w={18} h={20}><path d="M2 3l14 14M16 3L2 17" stroke="#3f6ea5" strokeWidth="3" /></Icon>
        </PlainButton>
      </WindowButtons>
    </TopBar>
  );
}

function Sidebar() {
  return (
    <SideBar>
      <Scroller $h={21} aria-label="Scroll up"><Caret dir="up" color="#627b87" /></Scroller>
      <Tools>
        <Selected aria-label="Pointer">
          <Icon w={36} h={36}>
            <path d="M13 7v19l4-4 4 8 4-2-4-7h5z" fill="#fff" stroke="#444" strokeWidth="1.500" />
          </Icon>
        </Selected>
        {drawingTools.map(([name, icon]) => (
          <Tool key={name} aria-label={name}>{icon}</Tool>
        ))}
      </Tools>
      <Scroller $h={22} $raised aria-label="Scroll down"><Caret /></Scroller>
      <Tool $h={53} aria-label="Active drawings">
        <Icon w={44} h={48}>
          <path d="M11 11h20l7 7v20H11z" fill="#fff" stroke="#bbb" />
          <path d="M16 33l4-12 4 10 4-10 3 6" stroke="#333" /><path d="M16 35h10" stroke="#19b030" strokeWidth="2" />
          <path d="M20 13l9 9" stroke="#e22" strokeWidth="2" />
          <g transform="translate(18 9)"><Wrench /></g>
          <circle cx="14" cy="12" r="8" fill="#128a1c" />
          <text x="10" y="17" {...glyph} fontSize="13" fill="#fff">5</text>
          <path d="M31 36h13l-6 6z" fill="#000" stroke="#fff" />
        </Icon>
      </Tool>
      <Tool $h={49} aria-label="More tools">
        <Icon>
          <g fill="#3c3c3c"><circle cx="15" cy="21" r="3" /><circle cx="25" cy="21" r="3" /><circle cx="35" cy="21" r="3" /></g>
          <path d="M28 29h13l-6 6z" fill="#000" stroke="#fff" strokeWidth="2" />
        </Icon>
      </Tool>
      <DrawTool aria-label="Drawing tools"><DrawingIcon /></DrawTool>
    </SideBar>
  );
}

const shift = i => `translate(${blocks[i].x} ${blocks[i].y})`;

function Candle({ data: [x, high, low, top, bottom, tone] }) {
  const [fill, edge] = candleColors[tone];
  return (
    <g>
      <path d={`M${x} ${high}V${low}`} stroke="#000" strokeWidth="12" />
      <path d={`M${x} ${high + 2}V${low - 2}`} stroke={edge} strokeWidth="3" />
      <rect x={x - 9} y={top + 1} width="18" height={Math.max(bottom - top - 2, 2)} fill={fill} stroke={edge} strokeWidth="3" />
    </g>
  );
}

function PriceChart() {
  return (
    <Canvas viewBox="0 0 5346 2904" preserveAspectRatio="none" fill="none" role="img" aria-label="DAX 4 hours">
      <polygon points={yellowBand} fill="rgba(255,255,90,.42)" stroke="rgba(255,255,120,.6)" strokeWidth="4" />
      <polygon points={cyanBand} fill="rgba(110,255,255,.45)" stroke="rgba(120,245,255,.6)" strokeWidth="4" />
      <g fill="rgba(100,140,255,.16)">
        <rect x="0" y="817" width="2046" height="72" />
        <rect x="0" y="1825" width="3252" height="180" />
        <rect x="0" y="2632" width="2613" height="228" />
      </g>
      <rect x="0" y="1501" width="3252" height="60" fill="rgba(0,0,156,.1)" />
      <rect x="0" y="1947" width="3254" height="48" fill="rgba(0,0,156,.1)" />
      {clouds.map(([block, fill, points]) => (
        <polygon key={points} points={points} transform={shift(block)} fill={fill} />
      ))}
      {slowAverage.map(([block, stroke, points]) => (
        <polyline key={points} points={points} transform={shift(block)} stroke={stroke} strokeWidth="18" strokeDasharray="32 29" />
      ))}
      <path d="M580 1705h22M625 1705h15l20-8" stroke="#ff0000" strokeWidth="18" />
      <path d="M602 1705h24M2030 787h20" stroke="#966400" strokeWidth="18" />
      <path d="M2048 787h32" stroke={colors.navy} strokeWidth="18" />
      <path d="M2262 808h20" stroke="#ff0000" strokeWidth="18" />
      {fastAverage.map(([block, stroke, points]) => (
        <polyline key={block + points} points={points} transform={shift(block)} stroke={stroke} strokeWidth="18" />
      ))}
      {trail.map(([block, points]) => (
        <polyline key={points} points={points} transform={shift(block)} stroke="#a00000" strokeWidth="8" strokeDasharray="20 18" />
      ))}
      {blocks.map(block => (
        <g key={`${block.x}:${block.y}`} transform={`translate(${block.x} ${block.y})`}>
          {block.candles.map(candle => (
            <Candle key={candle[0]} data={candle} />
          ))}
        </g>
      ))}
      <path d="M3163 1394h16" stroke="#000" strokeWidth="9" />
      <path d="M518 1461L587 881" stroke="#a01414" strokeWidth="4" />
      <path
        d="M1931 968L2048 1026 2187 1068 2305 1104 2422 1141 2472 1156 2660 1428 2782 1443M2921 1571L2944 1601"
        stroke="#109018"
        strokeWidth="4"
      />
      <g transform={shift(0)} fill="#be6450" fillOpacity=".75">
        {dots.map(([x, y]) => (
          <ellipse key={x} cx={x} cy={y} rx="16" ry="14" transform={`rotate(-30 ${x} ${y})`} />
        ))}
      </g>
      <g stroke={colors.sky} strokeWidth="3">
        <path d="M0 817H2046M0 889H2046" />
        <path d="M0 1825H3252V2005H0" />
        <path d="M0 2632H2613V2860H0" />
      </g>
      <path d="M2046 817v72" stroke={colors.sky} strokeWidth="5" />
      <path d="M0 1110H3250v36H0" stroke={colors.purple} strokeWidth="15" />
      <path d="M0 1501H3250v60H0" stroke={colors.navy} strokeWidth="15" />
      <path d="M0 1947H3252v48H0" stroke={colors.navy} strokeWidth="18" />
      <path d="M3252 1825v180" stroke={colors.sky} strokeWidth="4" />
      <path d="M0 130H5346" stroke="#34b233" strokeWidth="15" />
      <path d="M0 636H5346" stroke={colors.navy} strokeWidth="18" />
      <path d="M0 1615H5346" stroke="#f00" strokeWidth="15" />
      <path d="M0 2236H5346" stroke="#f00" strokeWidth="9" />
    </Canvas>
  );
}

function Chart() {
  return (
    <ChartGrid>
      <Plot>
        <PriceChart />
        <Label $x={54} $y={64} $color="#34b233">24,646.4</Label>
        <Label $x={54} $y={234}>24,395.7</Label>
        <Label $x={54} $y={560} $color="#f00">23,917.4</Label>
        <Label $x={908} $y={767} $color="#f00">23,614.8</Label>
        <Label $x={1790} $y={49} $size={24}>4h</Label>
        <Label $x={53} $y={995} $size={17} $weight={400}>IT-Finance.com - Real Time</Label>
        <Note $x={1155} $y={395} $w={638}>
          De momento zona inoperable para hoy solo tenemos
          <br />
          posibilidad de operativa bajista, solo en el caso de que
          <br />
          en apertura el precio este situado como minimo dentro
          <br />
          de la zona de correccion de H4. Mucha mas seguridad si
          <br />
          ya estuvieramos debajo de los, 23945. objetivo 23750.
        </Note>
        <Note $x={1182} $y={647} $w={521}>
          Si rompe soporte aunque sea solo con pluma
          <br />
          OBJETIVO los 23800 a 23750. Nuevo soporte
        </Note>
      </Plot>
      <PriceAxis>
        <PriceList>
          {prices.map(price => (
            <li key={price}><span>{price}</span></li>
          ))}
        </PriceList>
        <PriceTag $y={455} $h={24} $bg="linear-gradient(#fff, #ededed)" $color="#966400">24,084.9</PriceTag>
        <PriceTag $y={523} $h={23} $bg="linear-gradient(#fff, #ededed)" $color="#155a0a">23,999.0</PriceTag>
        <PriceTag $y={479} $h={24} $bg="linear-gradient(#ffe41a, #f5bf08)" $color="#000">24,026.7</PriceTag>
        <PriceTag $y={501} $h={26} $wide $bg="linear-gradient(#a4fba6, #85e089)" $color="#000">32m43s</PriceTag>
      </PriceAxis>
      <DateAxis>
        {dates.map(([name, x], i) => (
          <DateMark key={x} $gap={(dates[i + 1] ? dates[i + 1][1] : 1918) - x}>
            <span>{name}</span>
          </DateMark>
        ))}
      </DateAxis>
    </ChartGrid>
  );
}

function Footer() {
  return (
    <BottomBar>
      {leftActions.map(([name, icon]) => (
        <BarTool key={name} aria-label={name}>{icon}</BarTool>
      ))}
      <BarTool $w={18} aria-label="Collapse">
        <Icon w={16} h={16}><path d="M8 2L3 8l5 6M14 2L9 8l5 6" stroke="#3d5560" strokeWidth="2" /></Icon>
      </BarTool>
      <ScrollTrack>
        <ScrollArrow aria-label="Scroll left"><Caret dir="left" /></ScrollArrow>
        <Range type="range" min="0" max="100" defaultValue="100" aria-label="Chart position" />
        <ScrollArrow aria-label="Scroll right"><Caret dir="right" /></ScrollArrow>
      </ScrollTrack>
      {rightActions.map(([name, icon, width]) => (
        <BarTool key={name} $w={width} aria-label={name}>{icon}</BarTool>
      ))}
    </BottomBar>
  );
}

export default function App() {
  return (
    <Window>
      <GlobalStyle />
      <Toolbar />
      <Body>
        <Sidebar />
        <Main>
          <Chart />
          <Footer />
        </Main>
      </Body>
    </Window>
  );
}
